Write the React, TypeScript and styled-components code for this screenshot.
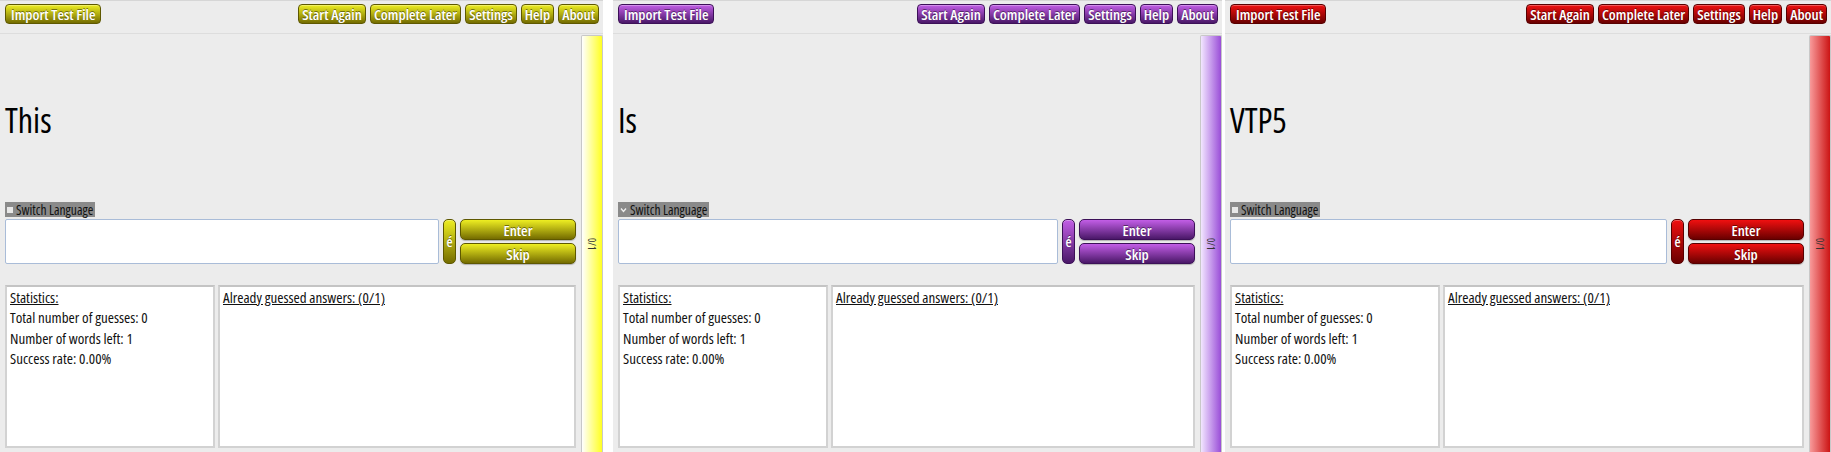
import React from "react";
import styled, { createGlobalStyle } from "styled-components";

type Palette = {
  top: string;
  bottom: string;
  edge: string;
  barFrom: string;
  barTo: string;
};

const yellow: Palette = {
  top: "#eeee22",
  bottom: "#746c00",
  edge: "#5e5800",
  barFrom: "#ffffff",
  barTo: "#ffff22",
};
const purple: Palette = {
  top: "#c25ee6",
  bottom: "#4a1868",
  edge: "#3c1058",
  barFrom: "#f2e6ff",
  barTo: "#9a4ed8",
};
const red: Palette = {
  top: "#f01010",
  bottom: "#6a0000",
  edge: "#580000",
  barFrom: "#f89a9a",
  barTo: "#cc1414",
};

const GlobalStyle = createGlobalStyle`
  html, body {
    margin: 0;
    padding: 0;
    background: #ffffff;
  }
  body {
    font-family: "Open Sans", "DejaVu Sans Condensed", sans-serif;
    font-stretch: 75%;
  }
`;

const Screens = styled.div`
  display: flex;
  height: 452px;
  overflow: hidden;
`;

const Panel = styled.div<{ $width: number; $gap: number }>`
  width: ${(p) => p.$width}px;
  margin-right: ${(p) => p.$gap}px;
  height: 452px;
  background: #ececec;
  display: flex;
  flex-direction: column;
  flex-shrink: 0;
`;

const TopBar = styled.div`
  display: flex;
  align-items: flex-start;
  justify-content: space-between;
  height: 34px;
  padding: 3px 4px 0 5px;
  border-top: 1px solid #d6d6d6;
  border-bottom: 1px solid #dddddd;
  box-sizing: border-box;
`;

const ButtonGroup = styled.div`
  display: flex;
  gap: 4px;
`;

const Btn = styled.button<{ $c: Palette }>`
  font-family: inherit;
  font-stretch: inherit;
  font-size: 15px;
  font-weight: 550;
  color: #ffffff;
  height: 20px;
  line-height: 18px;
  padding: 0 3px;
  border: 1px solid ${(p) => p.$c.edge};
  border-radius: 4px;
  background: linear-gradient(to bottom, ${(p) => p.$c.top}, ${(p) => p.$c.bottom});
  text-shadow: 0 -1px 0 rgba(0, 0, 0, 0.45);
  box-shadow: inset 0 1px 0 rgba(255, 255, 255, 0.3);
  cursor: pointer;
`;

const ImportBtn = styled(Btn)`
  padding: 0 5px;
`;

const Body = styled.div`
  flex: 1;
  display: flex;
  min-height: 0;
`;

const Content = styled.div`
  flex: 1;
  display: flex;
  flex-direction: column;
  padding: 0 5px 4px 5px;
  min-width: 0;
`;

const WordArea = styled.div`
  flex: 1;
  display: flex;
  align-items: center;
  padding-top: 4px;
`;

const Word = styled.div`
  font-size: 34px;
  font-stretch: 78%;
  color: #000000;
`;

const Toggle = styled.div`
  align-self: flex-start;
  display: flex;
  align-items: center;
  gap: 3px;
  background: #8a8a8a;
  color: #111111;
  font-size: 13.5px;
  height: 15px;
  padding: 0 2px 0 2px;
  margin-bottom: 2px;
`;

const ToggleBox = styled.span`
  width: 6px;
  height: 6px;
  background: #e8e8e8;
`;

const InputRow = styled.div`
  display: flex;
  height: 45px;
  gap: 4px;
`;

const Field = styled.div`
  flex: 1;
  background: #ffffff;
  border: 1px solid #a9bcd8;
  border-radius: 2px;
`;

const AccentBtn = styled(Btn)`
  width: 13px;
  height: 45px;
  padding: 0;
  border-radius: 5px;
  font-size: 14px;
`;

const SideButtons = styled.div`
  width: 116px;
  display: flex;
  flex-direction: column;
  justify-content: space-between;
`;

const WideBtn = styled(Btn)`
  width: 100%;
  height: 21px;
  border-radius: 5px;
  box-shadow: 0 1px 1px rgba(0, 0, 0, 0.25);
`;

const StatsRow = styled.div`
  display: flex;
  gap: 3px;
  height: 163px;
  margin-top: 21px;
`;

const Box = styled.div<{ $width?: number }>`
  ${(p) => (p.$width ? `width: ${p.$width}px;` : "flex: 1;")}
  box-sizing: border-box;
  background: #ffffff;
  border: 2px solid #d2d2d2;
  border-top-color: #c4c4c4;
  padding: 0 3px;
  font-size: 15px;
  color: #111111;
  line-height: 20.4px;
`;

const BoxTitle = styled.div`
  text-decoration: underline;
`;

const Progress = styled.div<{ $c: Palette }>`
  width: 20px;
  margin: 1px 0 0 0;
  border: 1px solid #c8c8c8;
  border-bottom: none;
  border-radius: 2px 2px 0 0;
  background: linear-gradient(to right, ${(p) => p.$c.barFrom}, ${(p) => p.$c.barTo});
  display: flex;
  align-items: center;
  justify-content: center;
`;

const ProgressLabel = styled.span`
  writing-mode: vertical-rl;
  font-size: 10px;
  color: #333333;
`;

const Chevron = () => (
  <svg width="7" height="6" viewBox="0 0 7 6">
    <path d="M1 1.5 L3.5 4.5 L6 1.5" fill="none" stroke="#eeeeee" strokeWidth="1.4" />
  </svg>
);

type ScreenProps = {
  word: string;
  c: Palette;
  width: number;
  gap: number;
  chevron?: boolean;
};

const Screen = ({ word, c, width, gap, chevron }: ScreenProps) => (
  <Panel $width={width} $gap={gap}>
    <TopBar>
      <ImportBtn $c={c}>Import Test File</ImportBtn>
      <ButtonGroup>
        <Btn $c={c}>Start Again</Btn>
        <Btn $c={c}>Complete Later</Btn>
        <Btn $c={c}>Settings</Btn>
        <Btn $c={c}>Help</Btn>
        <Btn $c={c}>About</Btn>
      </ButtonGroup>
    </TopBar>
    <Body>
      <Content>
        <WordArea>
          <Word>{word}</Word>
        </WordArea>
        <Toggle>
          {chevron ? <Chevron /> : <ToggleBox />}
          Switch Language
        </Toggle>
        <InputRow>
          <Field />
          <AccentBtn $c={c}>é</AccentBtn>
          <SideButtons>
            <WideBtn $c={c}>Enter</WideBtn>
            <WideBtn $c={c}>Skip</WideBtn>
          </SideButtons>
        </InputRow>
        <StatsRow>
          <Box $width={210}>
            <BoxTitle>Statistics:</BoxTitle>
            <div>Total number of guesses: 0</div>
            <div>Number of words left: 1</div>
            <div>Success rate: 0.00%</div>
          </Box>
          <Box>
            <BoxTitle>Already guessed answers: (0/1)</BoxTitle>
          </Box>
        </StatsRow>
      </Content>
      <Progress $c={c}>
        <ProgressLabel>0/1</ProgressLabel>
      </Progress>
    </Body>
  </Panel>
);

export default function App() {
  return (
    <>
      <GlobalStyle />
      <Screens>
        <Screen word="This" c={yellow} width={603} gap={10} />
        <Screen word="Is" c={purple} width={609} gap={3} chevron />
        <Screen word="VTP5" c={red} width={606} gap={0} />
      </Screens>
    </>
  );
}
